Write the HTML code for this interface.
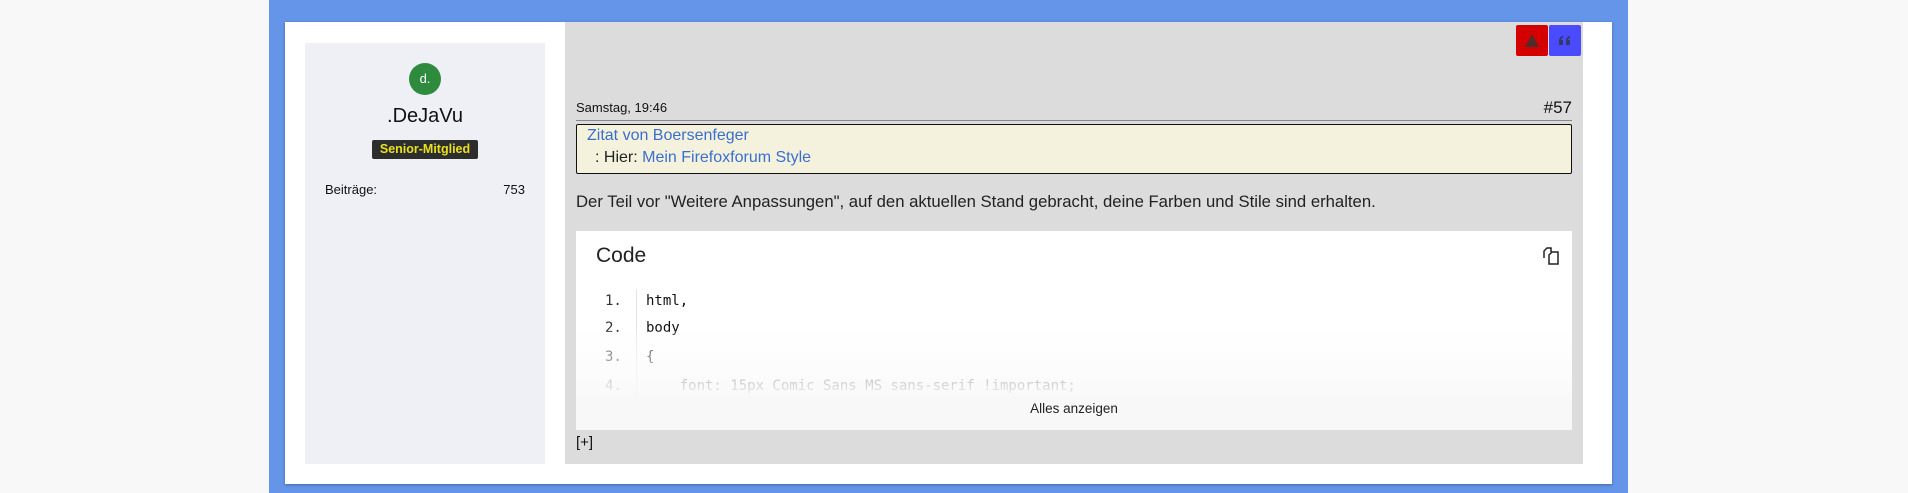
<!DOCTYPE html>
<html><head><meta charset="utf-8"><style>
*{margin:0;padding:0;box-sizing:border-box}
body{width:1908px;height:493px;background:#f8f8f8;font-family:"Liberation Sans",Arial,sans-serif;position:relative;overflow:hidden;color:#222}
.abs{position:absolute}
.blue{left:269px;top:0;width:1359px;height:493px;background:#6495e8}
.card{left:285px;top:22px;width:1327px;height:462px;background:#fff;box-shadow:0 1px 3px rgba(0,0,0,.3)}
.side{left:305px;top:43px;width:240px;height:421px;background:#eff0f5}
.gray{left:565px;top:22px;width:1018px;height:442px;background:#dcdcdc}
.btn{top:25px;width:32px;height:31px;border-radius:2px}
.quote{left:576px;top:124px;width:996px;height:50px;background:#f4f2dd;border:1px solid #111;border-radius:2px;font-size:16px}
.code{left:576px;top:231px;width:996px;height:199px;background:#fff;overflow:hidden}
.ln{position:absolute;font-family:"DejaVu Sans Mono","Liberation Mono",monospace;font-size:14px;white-space:pre}
</style></head><body>
<div class="abs blue"></div>
<div class="abs card"></div>
<div class="abs side"></div>
<div class="abs" style="left:409px;top:63px;width:32px;height:32px;border-radius:50%;background:#2e8b3e;color:#fff;font-size:13px;text-align:center;line-height:32px">d.</div>
<div class="abs" style="left:305px;top:105px;width:240px;text-align:center;font-size:20px;color:#111">.DeJaVu</div>
<div class="abs" style="left:372px;top:140px;width:106px;height:19px;background:#2d2d2d;border-radius:2px;color:#e8e020;font-weight:bold;font-size:12.5px;text-align:center;line-height:19px">Senior-Mitglied</div>
<div class="abs" style="left:325px;top:182px;font-size:13px;color:#111">Beiträge:</div>
<div class="abs" style="left:480px;top:182px;width:45px;text-align:right;font-size:13px;color:#111">753</div>
<div class="abs gray"></div>
<div class="abs btn" style="left:1516px;background:#d40000"><svg width="32" height="31"><path d="M16 9 L23 22 L9 22 Z" fill="#552a2a"/></svg></div>
<div class="abs btn" style="left:1549px;background:#4a4aff"><svg width="32" height="31"><g fill="#333a6a"><path d="M10 20 v-4 c0-3 2-5 4-5 v2 c-1 0-2 1-2 2 h2 v5z"/><path d="M17 20 v-4 c0-3 2-5 4-5 v2 c-1 0-2 1-2 2 h2 v5z"/></g></svg></div>
<div class="abs" style="left:576px;top:100px;font-size:13px;color:#111">Samstag, 19:46</div>
<div class="abs" style="left:1500px;top:98px;width:72px;text-align:right;font-size:17px;color:#111">#57</div>
<div class="abs" style="left:576px;top:120px;width:996px;height:1px;background:#888"></div>
<div class="abs quote">
<div class="abs" style="left:10px;top:2px;color:#3a6fd0">Zitat von Boersenfeger</div>
<div class="abs" style="left:18px;top:24px;color:#222">: Hier: <span style="color:#3a6fd0">Mein Firefoxforum Style</span></div>
</div>
<div class="abs" style="left:576px;top:192px;font-size:16.7px;color:#222">Der Teil vor "Weitere Anpassungen", auf den aktuellen Stand gebracht, deine Farben und Stile sind erhalten.</div>
<div class="abs code">
<div class="abs" style="left:20px;top:13px;font-size:21px;color:#222">Code</div>
<svg class="abs" style="left:966px;top:16px" width="18" height="18" viewBox="0 0 18 18"><g fill="#fff" stroke="#222" stroke-width="1.5"><path d="M2 11 V4 l3-3 h4 v4"/><path d="M7 17 V8 l3-3 h6 v12z"/></g></svg>
<div class="abs" style="left:60px;top:58px;width:1px;height:141px;background:#e5e5e5"></div>
<div class="ln" style="left:29px;top:62px;color:#333">1.</div><div class="ln" style="left:70px;top:62px;color:#111">html,</div>
<div class="ln" style="left:29px;top:89px;color:#333">2.</div><div class="ln" style="left:70px;top:89px;color:#111">body</div>
<div class="ln" style="left:29px;top:118px;color:#333">3.</div><div class="ln" style="left:70px;top:118px;color:#111">{</div>
<div class="ln" style="left:29px;top:147px;color:#333">4.</div><div class="ln" style="left:70px;top:147px;color:#111">    font: 15px Comic Sans MS sans-serif !important;</div>
<div class="abs" style="left:0;top:100px;width:996px;height:99px;background:linear-gradient(rgba(255,255,255,.2),rgba(250,250,250,.8) 50%,#f8f8f8 70%)"></div>
<div class="abs" style="left:0;top:170px;width:996px;text-align:center;font-size:13.5px;color:#222">Alles anzeigen</div>
</div>
<div class="abs" style="left:576px;top:434px;font-size:15px;color:#111">[+]</div>
</body></html>
